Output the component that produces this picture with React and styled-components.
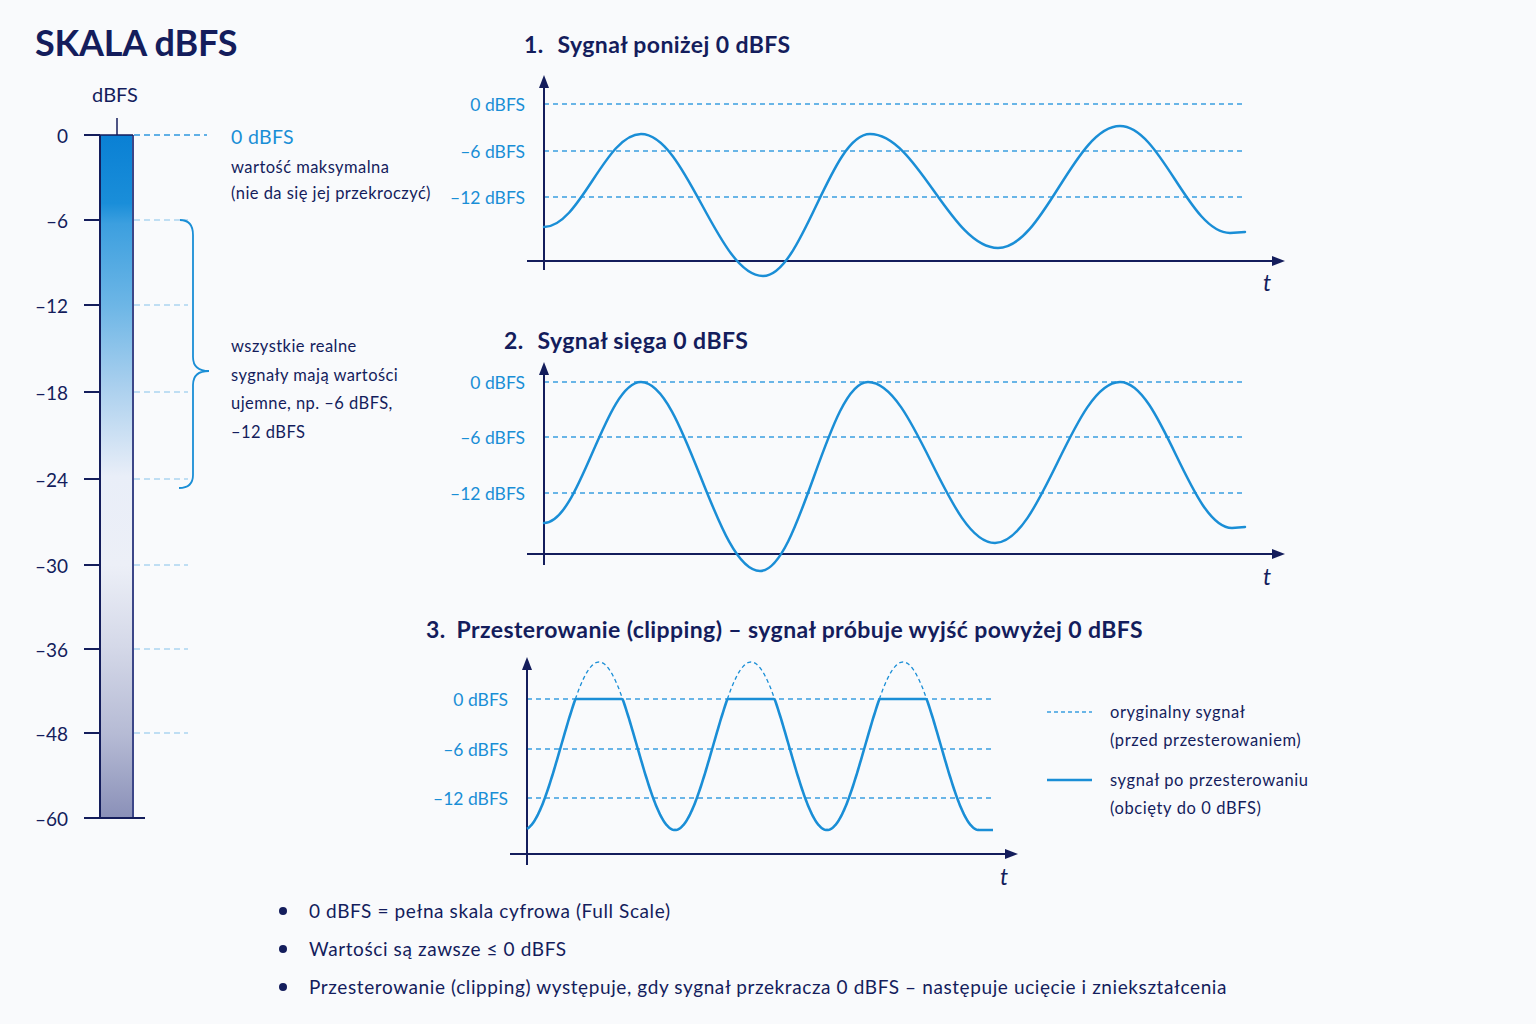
import React from 'react';
import styled, { createGlobalStyle } from 'styled-components';

const navy = '#141d5c';
const blue = '#1a8ed6';
const dash = '#3a9fe0';

const GlobalStyle = createGlobalStyle`
  html, body {
    margin: 0;
    padding: 0;
    background: #f9fafc;
  }
  body {
    font-family: Lato, "Noto Sans", "DejaVu Sans", sans-serif;
    color: ${navy};
  }
`;

const Page = styled.div`
  width: 1536px;
  height: 1024px;
  overflow: hidden;
  background: #f9fafc;
  display: flex;
  flex-direction: column;
`;

const Top = styled.div`
  display: grid;
  grid-template-columns: 420px 1fr;
`;

const LeftColumn = styled.div`
  display: flex;
  flex-direction: column;
`;

const Title = styled.h1`
  margin: 22px 0 0 35px;
  font-size: 36px;
  line-height: 40px;
  font-weight: 700;
  letter-spacing: -0.2px;
  color: ${navy};
`;

const MeterFigure = styled.div`
  display: flex;
  margin-top: 18px;
`;

const MeterSvg = styled.svg`
  display: block;
  flex: none;
  font-family: Lato, "Noto Sans", sans-serif;
`;

const Notes = styled.div`
  display: flex;
  flex-direction: column;
  padding: 45px 0 0 11px;
  white-space: nowrap;
`;

const NoteHead = styled.div`
  font-size: 19.5px;
  line-height: 24px;
  letter-spacing: 0.3px;
  color: ${blue};
  margin-bottom: 5px;
`;

const NoteText = styled.p`
  margin: ${({ $top }) => $top || 0}px 0 0 0;
  font-size: 16.5px;
  line-height: ${({ $lh }) => $lh}px;
  letter-spacing: 0.45px;
  color: ${navy};
`;

const RightColumn = styled.div`
  display: flex;
  flex-direction: column;
`;

const ChartHeading = styled.h2`
  margin: ${({ $top }) => $top}px 0 0 ${({ $indent }) => $indent}px;
  font-size: 23px;
  line-height: 28px;
  font-weight: 700;
  letter-spacing: 0.4px;
  color: ${navy};

  span {
    margin-right: ${({ $gap }) => $gap || 11}px;
  }
`;

const ChartSvg = styled.svg`
  display: block;
  flex: none;
  font-family: Lato, "Noto Sans", sans-serif;
`;

const ChartRow = styled.div`
  display: flex;
`;

const Legend = styled.div`
  display: flex;
  flex-direction: column;
  gap: 12px;
  padding: 55px 0 0 17px;
`;

const LegendItem = styled.div`
  display: flex;
  gap: 18px;
`;

const Swatch = styled.svg`
  flex: none;
  margin-top: 9px;
`;

const LegendText = styled.div`
  font-size: 16.5px;
  line-height: 28px;
  letter-spacing: 0.6px;
  color: ${navy};
`;

const BulletList = styled.ul`
  list-style: none;
  margin: 10px 0 0 279px;
  padding: 0;
  display: flex;
  flex-direction: column;
  gap: 14px;
`;

const Bullet = styled.li`
  display: flex;
  align-items: center;
  gap: 22px;
  font-size: 19px;
  line-height: 24px;
  letter-spacing: 0.6px;
  color: ${navy};

  &::before {
    content: '';
    width: 8px;
    height: 8px;
    border-radius: 50%;
    background: ${navy};
    flex: none;
  }
`;

const meterLevels = [
  { v: '0', y: 135 },
  { v: '–6', y: 220 },
  { v: '–12', y: 305 },
  { v: '–18', y: 392 },
  { v: '–24', y: 479 },
  { v: '–30', y: 565 },
  { v: '–36', y: 649 },
  { v: '–48', y: 733 },
  { v: '–60', y: 818 },
];

function Meter() {
  return (
    <MeterSvg width="220" height="760" viewBox="0 80 220 760">
      <defs>
        <linearGradient id="meterFill" x1="0" y1="0" x2="0" y2="1">
          <stop offset="0" stopColor="#0a80d4" />
          <stop offset="0.1" stopColor="#1a8ed9" />
          <stop offset="0.13" stopColor="#3c9fdf" />
          <stop offset="0.25" stopColor="#6db6e6" />
          <stop offset="0.37" stopColor="#abd0ee" />
          <stop offset="0.5" stopColor="#e9eef8" />
          <stop offset="0.63" stopColor="#eceff7" />
          <stop offset="0.75" stopColor="#d4d8e8" />
          <stop offset="0.88" stopColor="#b5bad4" />
          <stop offset="1" stopColor="#8a90b8" />
        </linearGradient>
      </defs>
      <text x="115" y="94" textAnchor="middle" dominantBaseline="central" fontSize="20" fill={navy}>
        dBFS
      </text>
      <rect x="100" y="135" width="33" height="683" fill="url(#meterFill)" />
      <line x1="100" x2="100" y1="135" y2="818" stroke={navy} strokeWidth="2" />
      <line x1="133" x2="133" y1="135" y2="818" stroke="#3c4688" strokeWidth="2" />
      <line x1="100" x2="133" y1="135" y2="135" stroke={navy} strokeWidth="1.5" />
      <line x1="117" x2="117" y1="118" y2="135" stroke={navy} strokeWidth="1.5" />
      <line x1="84" x2="145" y1="818" y2="818" stroke={navy} strokeWidth="2" />
      {meterLevels.map(l => (
        <g key={l.v}>
          <line x1="84" x2="100" y1={l.y} y2={l.y} stroke={navy} strokeWidth="2" />
          <text x="68" y={l.y} textAnchor="end" dominantBaseline="central" fontSize="19" fill={navy}>
            {l.v}
          </text>
          {l.y !== 818 && (
            <line
              x1="134"
              x2={l.y === 135 ? 207 : 188}
              y1={l.y}
              y2={l.y}
              stroke={l.y === 135 ? '#2f98de' : '#86c2ea'}
              strokeWidth={l.y === 135 ? 1.4 : 1.2}
              strokeDasharray="6 4"
            />
          )}
        </g>
      ))}
      <path
        d="M180,220 Q193,220 193,235 L193,357 Q193,371 209,371 Q193,371 193,385 L193,475 Q193,488 179,488"
        fill="none"
        stroke={blue}
        strokeWidth="1.8"
      />
    </MeterSvg>
  );
}

function Axes({ x0, top, bottom, axisY, left, right, levels, gridEnd, tx, ty }) {
  return (
    <g>
      {levels.map(l => (
        <g key={l.label}>
          <line x1={x0} x2={gridEnd} y1={l.y} y2={l.y} stroke={dash} strokeWidth="1.5" strokeDasharray="5 4" />
          <text x={x0 - 19} y={l.y} textAnchor="end" dominantBaseline="central" fill={blue} fontSize="17.5">
            {l.label}
          </text>
        </g>
      ))}
      <line x1={x0} x2={x0} y1={top + 8} y2={bottom} stroke={navy} strokeWidth="2" />
      <path d={`M${x0},${top} L${x0 - 5},${top + 13} L${x0 + 5},${top + 13} Z`} fill={navy} />
      <line x1={left} x2={right - 8} y1={axisY} y2={axisY} stroke={navy} strokeWidth="2" />
      <path d={`M${right},${axisY} L${right - 13},${axisY - 5} L${right - 13},${axisY + 5} Z`} fill={navy} />
      <text x={tx} y={ty} fontStyle="italic" fontSize="23" fill={navy}>
        t
      </text>
    </g>
  );
}

// cosine-like curve through extrema
const smooth = pts =>
  pts.reduce((d, [x, y], i) => {
    if (i === 0) return `M${x},${y}`;
    const [px, py] = pts[i - 1];
    const k = (x - px) * 0.37;
    return `${d} C${px + k},${py} ${x - k},${y} ${x},${y}`;
  }, '');

const wave1 = `${smooth([[544, 227], [641, 134], [763, 276], [870, 134], [998, 248], [1120, 126], [1230, 233]])} L1245,232`;
const wave2 = `${smooth([[544, 523], [641, 382], [760, 571], [868, 382], [995, 543], [1120, 382], [1232, 528]])} L1245,527`;

const T0 = 523;
const PERIOD = 152;
const MID = 746;
const AMP = 84;
const CLIP = 699;
const raw = x => MID + AMP * Math.cos((2 * Math.PI * (x - T0)) / PERIOD);

const clipped = (() => {
  const pts = [];
  for (let x = 527; x <= 993; x += 1) {
    const y = x > 979 ? 830 : Math.max(raw(x), CLIP);
    pts.push(`${x},${y.toFixed(1)}`);
  }
  return `M${pts.join(' L')}`;
})();

const originalPeaks = [0, 1, 2].map(i => {
  const c = T0 + PERIOD / 2 + i * PERIOD;
  const pts = [];
  for (let x = c - 24; x <= c + 24; x += 1) {
    pts.push(`${x},${Math.min(raw(x), CLIP).toFixed(1)}`);
  }
  return `M${pts.join(' L')}`;
});

const levels = (a, b, c) => [
  { label: '0 dBFS', y: a },
  { label: '–6 dBFS', y: b },
  { label: '–12 dBFS', y: c },
];

export default function App() {
  return (
    <Page>
      <GlobalStyle />
      <Top>
        <LeftColumn>
          <Title>SKALA dBFS</Title>
          <MeterFigure>
            <Meter />
            <Notes>
              <NoteHead>0 dBFS</NoteHead>
              <NoteText $lh={26}>wartość maksymalna</NoteText>
              <NoteText $lh={26}>(nie da się jej przekroczyć)</NoteText>
              <NoteText $lh={28.5} $top={126}>
                wszystkie realne
                <br />
                sygnały mają wartości
                <br />
                ujemne, np. –6 dBFS,
                <br />
                –12 dBFS
              </NoteText>
            </Notes>
          </MeterFigure>
        </LeftColumn>

        <RightColumn>
          <ChartHeading $top={30} $indent={104} $gap={14}>
            <span>1.</span>Sygnał poniżej 0 dBFS
          </ChartHeading>
          <ChartSvg width="900" height="237" viewBox="420 58 900 237">
            <Axes
              x0={544}
              top={75}
              bottom={270}
              axisY={261}
              left={527}
              right={1285}
              levels={levels(104, 151, 197)}
              gridEnd={1245}
              tx={1263}
              ty={291}
            />
            <path d={wave1} fill="none" stroke={blue} strokeWidth="2.5" strokeLinecap="round" />
          </ChartSvg>

          <ChartHeading $top={31} $indent={84} $gap={14}>
            <span>2.</span>Sygnał sięga 0 dBFS
          </ChartHeading>
          <ChartSvg width="900" height="237" viewBox="420 354 900 237">
            <Axes
              x0={544}
              top={362}
              bottom={565}
              axisY={554}
              left={527}
              right={1285}
              levels={levels(382, 437, 493)}
              gridEnd={1245}
              tx={1263}
              ty={585}
            />
            <path d={wave2} fill="none" stroke={blue} strokeWidth="2.5" strokeLinecap="round" />
          </ChartSvg>

          <ChartHeading $top={24} $indent={6} $gap={11}>
            <span>3.</span>Przesterowanie (clipping) – sygnał próbuje wyjść powyżej 0 dBFS
          </ChartHeading>
          <ChartRow>
            <ChartSvg width="610" height="246" viewBox="420 643 610 246">
              <Axes
                x0={527}
                top={657}
                bottom={865}
                axisY={854}
                left={510}
                right={1018}
                levels={levels(699, 749, 798)}
                gridEnd={995}
                tx={1000}
                ty={885}
              />
              {originalPeaks.map((d, i) => (
                <path key={i} d={d} fill="none" stroke={blue} strokeWidth="1.3" strokeDasharray="4 3" />
              ))}
              <path d={clipped} fill="none" stroke={blue} strokeWidth="2.6" strokeLinejoin="round" />
            </ChartSvg>
            <Legend>
              <LegendItem>
                <Swatch width="45" height="10">
                  <line x1="0" x2="45" y1="5" y2="5" stroke={dash} strokeWidth="1.4" strokeDasharray="4 3" />
                </Swatch>
                <LegendText>
                  oryginalny sygnał
                  <br />
                  (przed przesterowaniem)
                </LegendText>
              </LegendItem>
              <LegendItem>
                <Swatch width="45" height="10">
                  <line x1="0" x2="45" y1="5" y2="5" stroke={blue} strokeWidth="2.6" />
                </Swatch>
                <LegendText>
                  sygnał po przesterowaniu
                  <br />
                  (obcięty do 0 dBFS)
                </LegendText>
              </LegendItem>
            </Legend>
          </ChartRow>
        </RightColumn>
      </Top>

      <BulletList>
        <Bullet>0 dBFS = pełna skala cyfrowa (Full Scale)</Bullet>
        <Bullet>Wartości są zawsze ≤ 0 dBFS</Bullet>
        <Bullet>Przesterowanie (clipping) występuje, gdy sygnał przekracza 0 dBFS – następuje ucięcie i zniekształcenia</Bullet>
      </BulletList>
    </Page>
  );
}
